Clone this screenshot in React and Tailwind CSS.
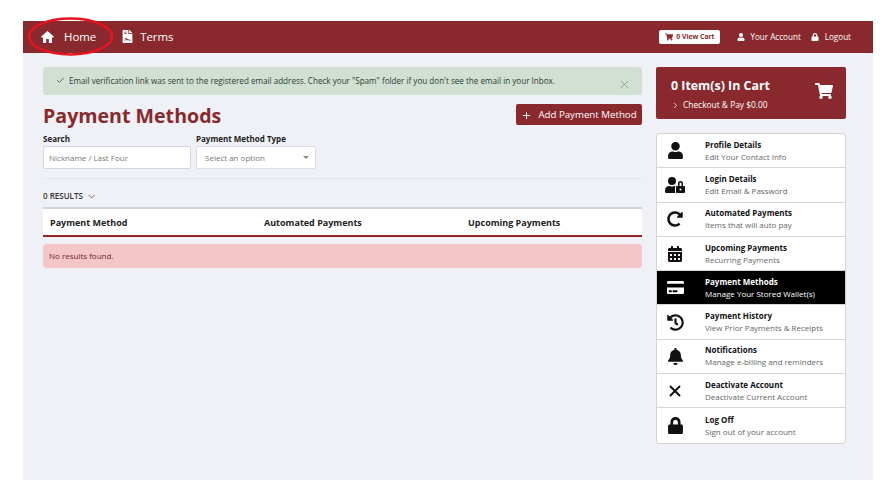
import { FaFileContract, FaShoppingCart, FaUser, FaLock, FaUserLock, FaRedoAlt, FaCalendarAlt, FaCreditCard, FaHistory, FaBell } from 'react-icons/fa'
import { ChevronDown, ChevronRight, Check, Plus, X } from 'lucide-react'

const MENU = [
  { icon: FaUser, size: 17, title: 'Profile Details', sub: 'Edit Your Contact Info' },
  { icon: FaUserLock, size: 20, title: 'Login Details', sub: 'Edit Email & Password' },
  { icon: FaRedoAlt, size: 16, title: 'Automated Payments', sub: 'Items that will auto pay' },
  { icon: FaCalendarAlt, size: 16, title: 'Upcoming Payments', sub: 'Recurring Payments' },
  { icon: FaCreditCard, size: 17, title: 'Payment Methods', sub: 'Manage Your Stored Wallet(s)', active: true },
  { icon: FaHistory, size: 17, title: 'Payment History', sub: 'View Prior Payments & Receipts' },
  { icon: FaBell, size: 17, title: 'Notifications', sub: 'Manage e-billing and reminders' },
  { icon: X, size: 18, stroke: 2.5, title: 'Deactivate Account', sub: 'Deactivate Current Account' },
  { icon: FaLock, size: 17, title: 'Log Off', sub: 'Sign out of your account' },
]

const HomeIcon = () => (
  <svg width="13" height="12" viewBox="0 0 13 12" fill="currentColor">
    <path d="M6.5 0 13 5.7l-.7.8H11V12H7.8V8H5.2v4H2V6.5H.7L0 5.7z" />
  </svg>
)

const Header = () => (
  <header className="relative flex h-8 items-center justify-between bg-[#8a292d] pl-[18px] pr-[22px] text-white">
    <nav className="flex items-center text-[11.4px]">
      <HomeIcon />
      <span className="ml-[10px]">Home</span>
      <FaFileContract size={13} className="ml-[25px]" />
      <span className="ml-[6px]">Terms</span>
    </nav>
    <div className="flex items-center text-[8.1px]">
      <span className="flex h-[14px] w-[61px] items-center justify-center gap-[3px] rounded-[2px] bg-white text-[6.8px] font-bold text-[#8a292d]">
        <FaShoppingCart size={8} />0 View Cart
      </span>
      <FaUser size={8} className="ml-[17px]" />
      <span className="ml-[5px]">Your Account</span>
      <FaLock size={8} className="ml-[10px]" />
      <span className="ml-[6px]">Logout</span>
    </div>
    <svg className="absolute left-[4px] top-[-4px]" width="88" height="40" viewBox="0 0 88 40" fill="none">
      <ellipse cx="43.5" cy="19.5" rx="41.5" ry="18" stroke="#e8131f" strokeWidth="2.5" />
    </svg>
  </header>
)

const Filters = () => (
  <div className="mt-[6px] flex gap-[5px] border-b border-[#e4e6ea] pb-[9px] text-[8px]">
    <label className="flex w-[148px] flex-col">
      <span className="h-[13px] font-bold leading-[12px] text-[#222]">Search</span>
      <span className="flex h-[23px] items-center rounded-[2px] border border-[#d5d6da] bg-white pl-[5px] text-[#777]">
        Nickname / Last Four
      </span>
    </label>
    <label className="flex w-[120px] flex-col">
      <span className="h-[13px] font-bold leading-[12px] text-[#222]">Payment Method Type</span>
      <span className="flex h-[23px] items-center justify-between rounded-[2px] border border-[#dedfe3] bg-white pl-[8px] pr-[6px] text-[#777]">
        Select an option
        <span className="h-0 w-0 border-x-[3px] border-t-[3px] border-x-transparent border-t-[#888]" />
      </span>
    </label>
  </div>
)

const ResultsTable = () => (
  <>
    <div className="mt-[11px] flex h-[12px] items-center gap-[3px] text-[8px] font-semibold text-[#333]">
      0 RESULTS <ChevronDown size={11} strokeWidth={1.5} />
    </div>
    <div className="mt-[5px] grid h-[30px] grid-cols-[214px_204px_1fr] items-center border-t-2 border-b-2 border-t-[#d2d3d6] border-b-[#962429] bg-white pl-[7px] pt-[1px] text-[9px] font-bold text-[#222]">
      <span>Payment Method</span>
      <span>Automated Payments</span>
      <span>Upcoming Payments</span>
    </div>
    <div className="mt-[7px] flex h-[24px] items-center rounded-[3px] bg-[#f4c6c8] pb-[1px] pl-[6px] text-[8px] text-[#7a2428]">
      No results found.
    </div>
  </>
)

const Sidebar = () => (
  <aside className="w-[190px] shrink-0">
    <div className="flex h-[52px] items-center justify-between rounded-[2px] bg-[#8a292d] pl-[15px] pr-[13px] pt-[2px] text-white">
      <div>
        <div className="text-[12.4px] font-bold leading-[18px]">0 Item(s) In Cart</div>
        <div className="mt-[4px] flex items-center gap-[3px] text-[8.4px] leading-[12px]">
          <ChevronRight size={9} />
          Checkout &amp; Pay $0.00
        </div>
      </div>
      <FaShoppingCart size={18} className="mb-[6px]" />
    </div>
    <ul className="mt-[14px] overflow-hidden rounded-[3px] border border-[#d2d3d6] bg-white">
      {MENU.map(({ icon: Icon, size, stroke, title, sub, active }) => (
        <li
          key={title}
          className={`flex h-[34.3px] items-center border-b border-[#d5d6d9] last:border-b-0 ${
            active ? 'bg-black text-white' : 'text-[#111]'
          }`}
        >
          <span className="flex w-[36px] shrink-0 justify-center">
            <Icon size={size} strokeWidth={stroke} />
          </span>
          <span className="ml-[12px] flex flex-col text-[8px] leading-[12px]">
            <span className="font-bold">{title}</span>
            <span className={active ? 'text-white' : 'text-[#666]'}>{sub}</span>
          </span>
        </li>
      ))}
    </ul>
  </aside>
)

export default function App() {
  return (
    <div className="h-[492px] w-[890px] overflow-hidden bg-white pl-[23px] pt-[21px] font-['Open_Sans',sans-serif]">
      <div className="h-[459px] w-[850px] bg-[#eff1f6]">
        <Header />
        <main className="flex gap-[14px] pl-[20px] pr-[27px] pt-[14px]">
          <section className="w-[599px] shrink-0">
            <div className="flex h-[28px] items-center justify-between rounded-[3px] bg-[#d2e0d4] pl-[13px] pr-[11px] text-[8.1px] text-[#2c3d30]">
              <span className="flex items-center gap-[4px]">
                <Check size={9} strokeWidth={2} />
                Email verification link was sent to the registered email address. Check your "Spam" folder if you don't see the email in your Inbox.
              </span>
              <X size={13} strokeWidth={1.25} className="mt-[6px] text-[#7f8c82]" />
            </div>
            <div className="mt-[9px] flex h-[23px] items-center justify-between">
              <h1 className="text-[19.6px] font-bold leading-[28px] text-[#8a292d]">Payment Methods</h1>
              <button className="mb-[2px] flex h-[21px] w-[126px] items-center justify-center gap-[6px] rounded-[2px] bg-[#8a292d] pt-[1px] text-[9.7px] text-white">
                <Plus size={11} />
                Add Payment Method
              </button>
            </div>
            <Filters />
            <ResultsTable />
          </section>
          <Sidebar />
        </main>
      </div>
    </div>
  )
}
